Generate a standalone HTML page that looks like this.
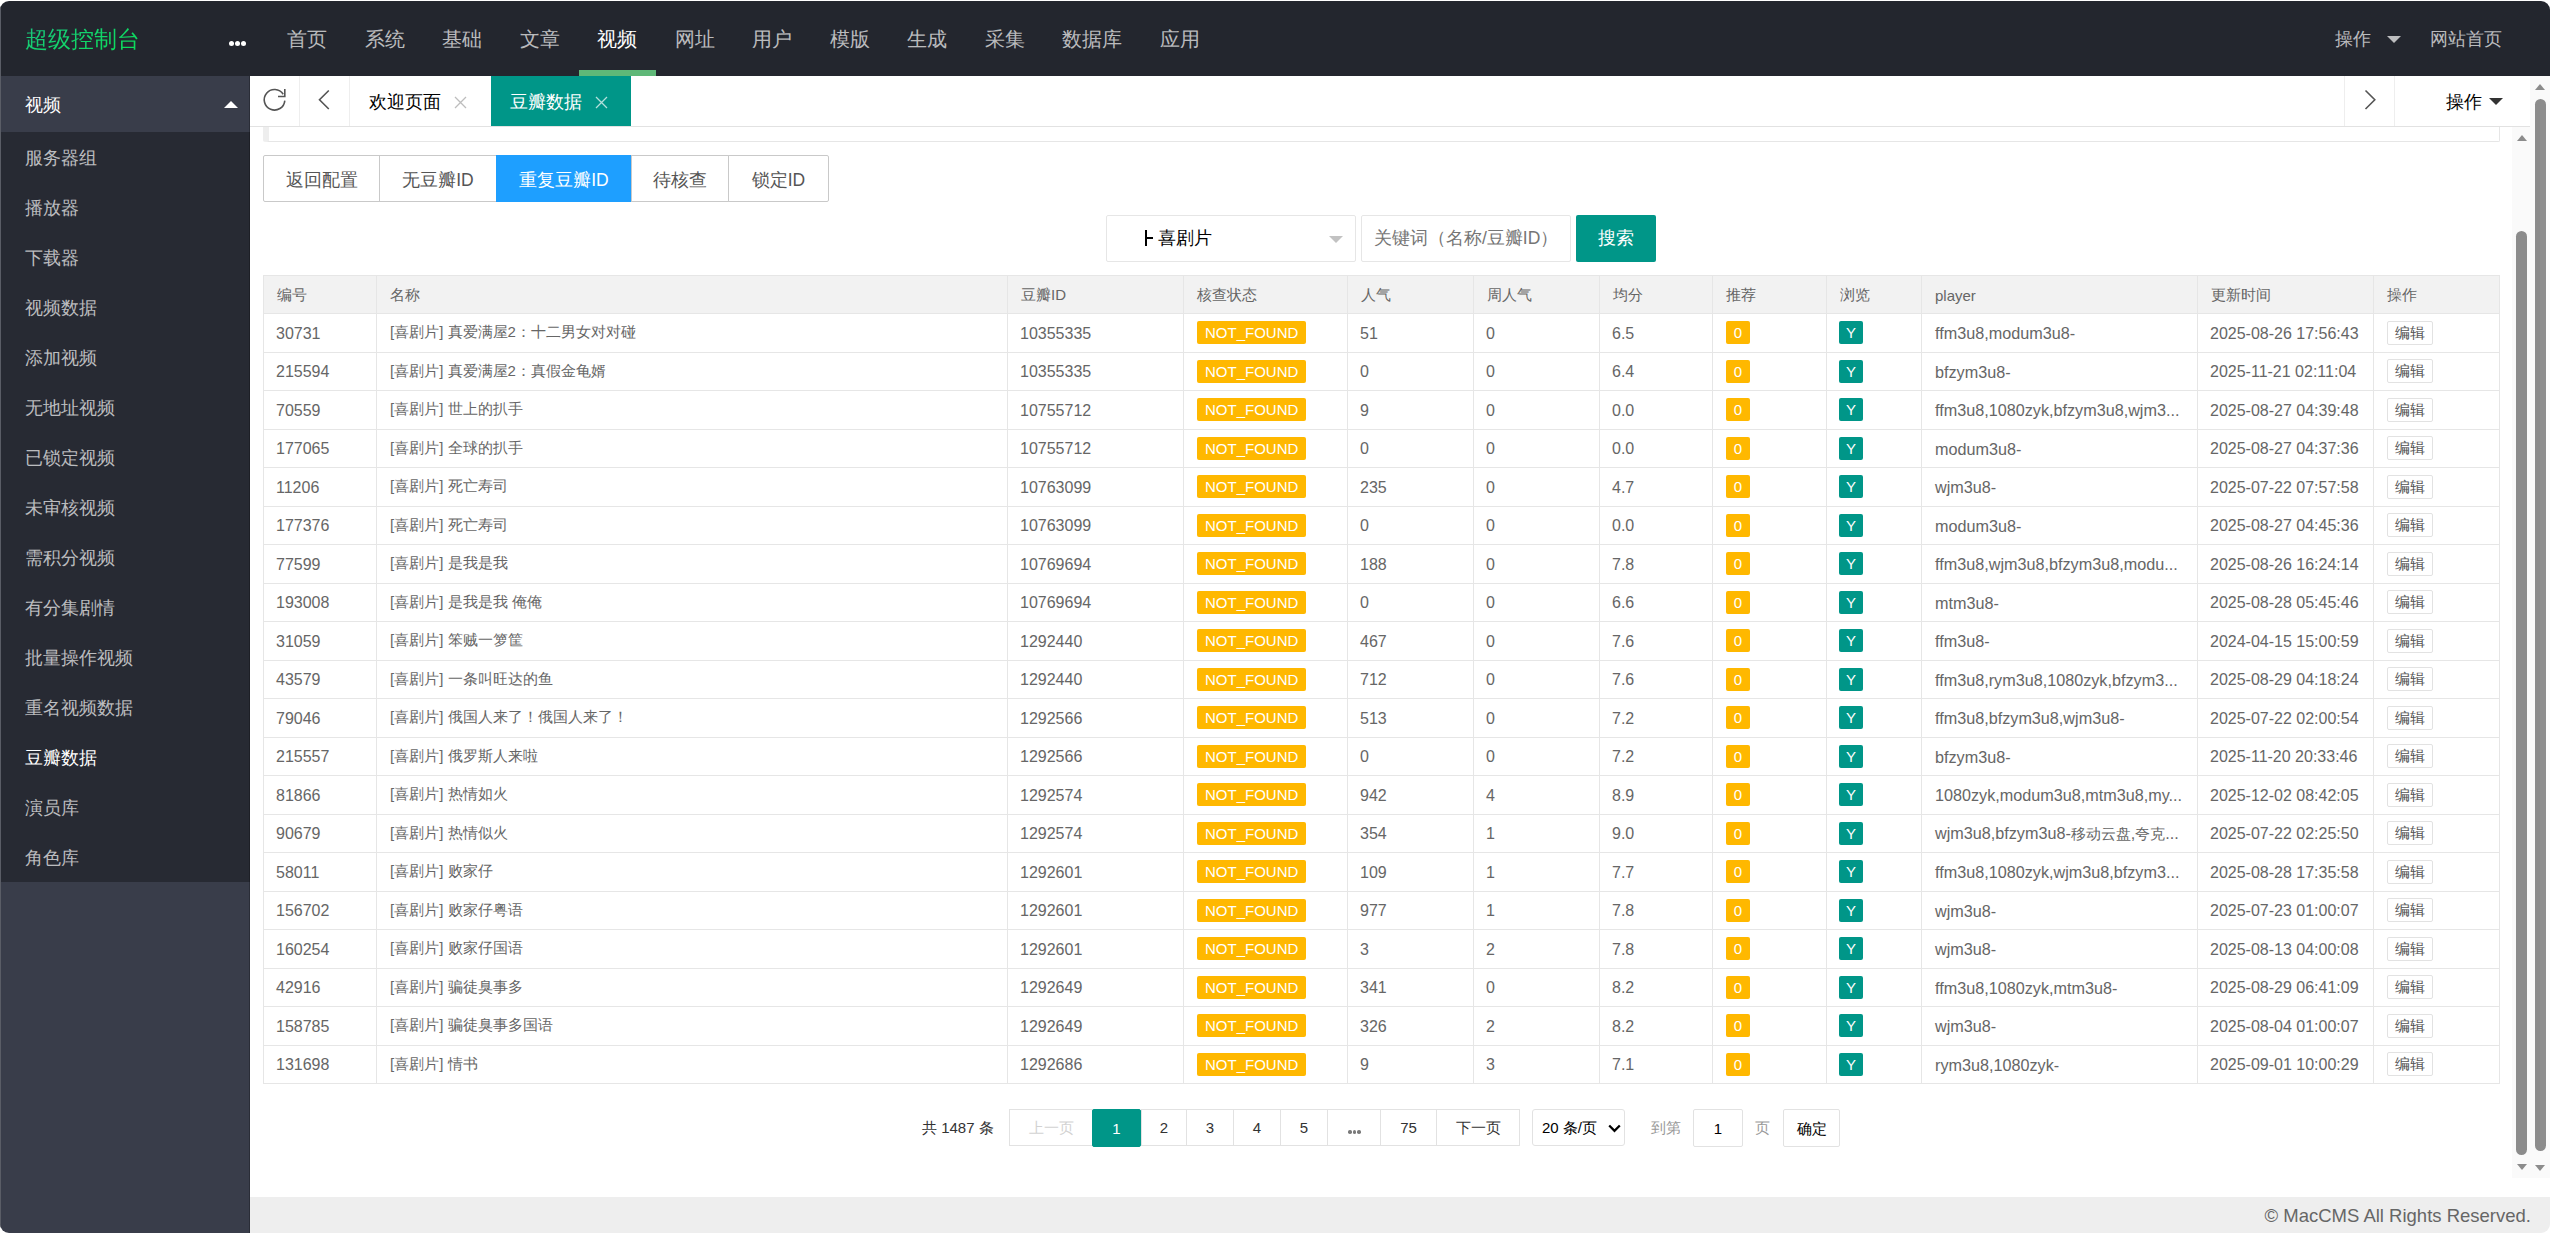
<!DOCTYPE html><html><head><meta charset="utf-8"><style>
*{margin:0;padding:0;box-sizing:border-box}
html,body{width:2550px;height:1233px;overflow:hidden;background:#fff;font-family:"Liberation Sans",sans-serif;}
.abs{position:absolute}
#win{position:absolute;left:0;top:1px;width:2550px;height:1232px;border-radius:9px;overflow:hidden;background:#fff}
#pg{position:absolute;left:0;top:-1px;width:2550px;height:1233px}
#hdr{position:absolute;left:0;top:1px;width:2550px;height:75px;background:#23262e}
#logo{position:absolute;left:25px;top:0;height:75px;line-height:77px;font-size:22.5px;white-space:nowrap;background:linear-gradient(160deg,#22b98e 0%,#12d46a 50%,#05e448 100%);-webkit-background-clip:text;background-clip:text;color:transparent}
.dots{position:absolute;left:229px;top:40px;}
.dots i{position:absolute;top:0;width:5px;height:5px;border-radius:50%;background:#fff}
.nav{position:absolute;top:0;height:75px;line-height:77px;font-size:20px;color:rgba(255,255,255,.7);white-space:nowrap}
.nav.on{color:#fff}
#uline{position:absolute;left:579px;top:69px;width:77px;height:6px;background:#5fb878}
#side{position:absolute;left:0;top:76px;width:250px;height:1157px;background:#393d4a}
#sedge{position:absolute;left:249px;top:76px;width:1px;height:1157px;background:rgba(0,0,0,.25)}
#side .par{position:absolute;left:0;top:0;width:250px;height:56px;background:#393d4a;color:#fff;font-size:17.5px;line-height:58px;padding-left:25px}
#side .kids{position:absolute;left:0;top:56px;width:250px;height:750px;background:#272a33}
#side .kid{position:absolute;left:25px;height:50px;line-height:52px;font-size:17.5px;color:rgba(255,255,255,.7);white-space:nowrap}
#side .kid.on{color:#fff}
#lborder{position:absolute;left:0;top:1px;width:1px;height:1232px;background:#5a5d66}
#tabs{position:absolute;left:250px;top:76px;width:2280px;height:51px;background:#fff;border-bottom:1px solid #e2e2e2}
.tcell{position:absolute;top:0;height:50px;border-right:1px solid #eee}
.ttl{position:absolute;top:0;height:50px;line-height:52px;font-size:17.5px;color:#000;white-space:nowrap}
#content{position:absolute;left:250px;top:127px;width:2262px;height:1070px;background:#fff;overflow:hidden}
#footer{position:absolute;left:250px;top:1197px;width:2300px;height:36px;background:#eee}
#footer span{position:absolute;right:19px;top:0px;line-height:37px;font-size:18.5px;color:#666;white-space:nowrap}
.btng{position:absolute;top:155px;height:47px;border:1px solid #c9c9c9;border-radius:2px;}
.btn{position:absolute;top:155px;height:47px;line-height:49px;font-size:17.5px;color:#555;border:1px solid #c9c9c9;background:#fff;text-align:center;white-space:nowrap}
table{border-collapse:collapse;table-layout:fixed;position:absolute;left:263px;top:275px}
td,th{border:1px solid #e6e6e6;font-size:15px;color:#666;text-align:left;font-weight:normal;padding:0 0 0 13px;white-space:nowrap;overflow:hidden}
th{background:#f2f2f2;height:38px;padding-top:2px}
td{height:38.5px}
td.n{font-size:16px;padding-left:12px;padding-top:2px}
td.p{font-size:16.2px;padding-top:2px}
td.p i{font-style:normal;font-size:15px}
.bd{display:inline-block;height:23px;line-height:23px;padding:0 8px;margin-left:0;color:#fff;font-size:15px;border-radius:2px;vertical-align:middle}
.org{background:#ffb800}
.sq{width:24px;padding:0;text-align:center}
.grn{background:#009688}
.edit{display:inline-block;height:24px;line-height:22px;width:46px;text-align:center;padding:0;border:1px solid #e2e2e2;border-radius:2px;color:#555;font-size:15px;background:#fff}
.pg{position:absolute;top:1109px;height:37px;line-height:36px;border:1px solid #e2e2e2;font-size:15px;color:#333;text-align:center;background:#fff;white-space:nowrap}
.dt{position:absolute;top:20px;width:3.5px;height:3.5px;border-radius:50%;background:#7a7a7a;margin-left:-1px}
.sb-thumb{position:absolute;background:#8c8c8c;border-radius:6px}
.tri-up{position:absolute;width:0;height:0;border-left:5px solid transparent;border-right:5px solid transparent;border-bottom:6px solid #8c8c8c}
.tri-dn{position:absolute;width:0;height:0;border-left:5px solid transparent;border-right:5px solid transparent;border-top:6px solid #8c8c8c}
</style></head><body><div id="win"><div id="pg">
<div id="hdr"><div id="logo">超级控制台</div>
<div class="dots"><i style="left:0"></i><i style="left:6px"></i><i style="left:12px"></i></div>
<div class="nav" style="left:287px">首页</div>
<div class="nav" style="left:365px">系统</div>
<div class="nav" style="left:442px">基础</div>
<div class="nav" style="left:520px">文章</div>
<div class="nav on" style="left:597px">视频</div>
<div class="nav" style="left:675px">网址</div>
<div class="nav" style="left:752px">用户</div>
<div class="nav" style="left:830px">模版</div>
<div class="nav" style="left:907px">生成</div>
<div class="nav" style="left:985px">采集</div>
<div class="nav" style="left:1062px">数据库</div>
<div class="nav" style="left:1160px">应用</div>
<div id="uline"></div>
<div class="nav" style="left:2335px;font-size:17.5px">操作</div><div class="abs" style="left:2387px;top:35px;width:0;height:0;border-left:7px solid transparent;border-right:7px solid transparent;border-top:7px solid rgba(255,255,255,.7)"></div>
<div class="nav" style="left:2430px;font-size:17.5px">网站首页</div>
</div>
<div id="side"><div class="par">视频</div><div class="abs" style="left:224px;top:25px;width:0;height:0;border-left:7px solid transparent;border-right:7px solid transparent;border-bottom:7px solid #fff"></div><div class="kids">
<div class="kid" style="top:0px">服务器组</div>
<div class="kid" style="top:50px">播放器</div>
<div class="kid" style="top:100px">下载器</div>
<div class="kid" style="top:150px">视频数据</div>
<div class="kid" style="top:200px">添加视频</div>
<div class="kid" style="top:250px">无地址视频</div>
<div class="kid" style="top:300px">已锁定视频</div>
<div class="kid" style="top:350px">未审核视频</div>
<div class="kid" style="top:400px">需积分视频</div>
<div class="kid" style="top:450px">有分集剧情</div>
<div class="kid" style="top:500px">批量操作视频</div>
<div class="kid" style="top:550px">重名视频数据</div>
<div class="kid on" style="top:600px">豆瓣数据</div>
<div class="kid" style="top:650px">演员库</div>
<div class="kid" style="top:700px">角色库</div>
</div></div>
<div id="tabs">
<div class="tcell" style="left:0;width:50px"><svg class="abs" style="left:12px;top:12px" width="26" height="26" viewBox="0 0 26 26"><path d="M21.2 6.2 A10.3 10.3 0 1 0 22.8 12.6" fill="none" stroke="#555" stroke-width="1.6"/><path d="M22.8 1 L22.8 8.5 L16 8.5" fill="none" stroke="#555" stroke-width="1.6"/></svg></div>
<div class="tcell" style="left:50px;width:50px"><svg class="abs" style="left:17px;top:13px" width="16" height="24" viewBox="0 0 16 24"><path d="M11.8 1.5 L2.5 10.8 L11.8 20" fill="none" stroke="#555" stroke-width="1.6"/></svg></div>
<div class="ttl" style="left:119px">欢迎页面</div><svg class="abs" style="left:204px;top:20px" width="13" height="13" viewBox="0 0 13 13"><path d="M1 1L12 12M12 1L1 12" stroke="#bdbdbd" stroke-width="1.3"/></svg>
<div class="abs" style="left:241px;top:0;width:140px;height:50px;background:#009688"></div><div class="ttl" style="left:260px;color:#fff">豆瓣数据</div><svg class="abs" style="left:345px;top:20px" width="13" height="13" viewBox="0 0 13 13"><path d="M1 1L12 12M12 1L1 12" stroke="rgba(255,255,255,.7)" stroke-width="1.3"/></svg>
<div class="tcell" style="left:2094px;width:51px;border-left:1px solid #eee;border-right:1px solid #eee"><svg class="abs" style="left:18px;top:13px" width="16" height="24" viewBox="0 0 16 24"><path d="M2.5 1.5 L11.8 10.8 L2.5 20" fill="none" stroke="#555" stroke-width="1.6"/></svg></div>
<div class="ttl" style="left:2196px">操作</div><div class="abs" style="left:2239px;top:22px;width:0;height:0;border-left:7px solid transparent;border-right:7px solid transparent;border-top:7px solid #333"></div>
</div>
<div class="abs" style="left:263px;top:127px;width:2237px;height:15px;border-left:6px solid #eee;border-right:1px solid #e6e6e6;border-bottom:1px solid #e6e6e6;border-radius:0 0 2px 2px"></div>
<div class="btn" style="left:263px;width:117px;border-radius:2px 0 0 2px;">返回配置</div>
<div class="btn" style="left:379px;width:118px;">无豆瓣ID</div>
<div class="btn" style="left:496px;width:136px;background:#1e9fff;color:#fff;border-color:#1e9fff;">重复豆瓣ID</div>
<div class="btn" style="left:631px;width:98px;">待核查</div>
<div class="btn" style="left:728px;width:101px;border-radius:0 2px 2px 0;">锁定ID</div>
<div class="abs" style="left:1106px;top:215px;width:250px;height:47px;border:1px solid #e6e6e6;border-radius:2px"></div>
<div class="abs" style="left:1145px;top:230px;width:2px;height:16px;background:#000"></div><div class="abs" style="left:1147px;top:237px;width:6px;height:2px;background:#000"></div>
<div class="abs" style="left:1158px;top:215px;line-height:47px;font-size:17.5px;color:#000;white-space:nowrap">喜剧片</div>
<div class="abs" style="left:1329px;top:236px;width:0;height:0;border-left:7px solid transparent;border-right:7px solid transparent;border-top:7px solid #c2c2c2"></div>
<div class="abs" style="left:1361px;top:215px;width:210px;height:47px;border:1px solid #e6e6e6;border-radius:2px"></div>
<div class="abs" style="left:1374px;top:215px;line-height:47px;font-size:17.5px;color:#757575;white-space:nowrap">关键词（名称/豆瓣ID）</div>
<div class="abs" style="left:1576px;top:215px;width:80px;height:47px;background:#009688;border-radius:2px;color:#fff;font-size:17.5px;line-height:47px;text-align:center">搜索</div>
<table><colgroup>
<col style="width:113px">
<col style="width:631px">
<col style="width:176px">
<col style="width:164px">
<col style="width:126px">
<col style="width:126px">
<col style="width:113px">
<col style="width:114px">
<col style="width:95px">
<col style="width:276px">
<col style="width:176px">
<col style="width:126px">
</colgroup><tr>
<th>编号</th>
<th>名称</th>
<th>豆瓣ID</th>
<th>核查状态</th>
<th>人气</th>
<th>周人气</th>
<th>均分</th>
<th>推荐</th>
<th>浏览</th>
<th>player</th>
<th>更新时间</th>
<th>操作</th>
</tr>
<tr>
<td class="n">30731</td><td>[喜剧片] 真爱满屋2：十二男女对对碰</td><td class="n">10355335</td><td><span class="bd org">NOT_FOUND</span></td><td class="n">51</td><td class="n">0</td><td class="n">6.5</td><td><span class="bd org sq">0</span></td><td><span class="bd grn sq" style="margin-left:-1px">Y</span></td><td class="p">ffm3u8,modum3u8-</td><td class="n">2025-08-26 17:56:43</td><td><span class="edit">编辑</span></td>
</tr>
<tr>
<td class="n">215594</td><td>[喜剧片] 真爱满屋2：真假金龟婿</td><td class="n">10355335</td><td><span class="bd org">NOT_FOUND</span></td><td class="n">0</td><td class="n">0</td><td class="n">6.4</td><td><span class="bd org sq">0</span></td><td><span class="bd grn sq" style="margin-left:-1px">Y</span></td><td class="p">bfzym3u8-</td><td class="n">2025-11-21 02:11:04</td><td><span class="edit">编辑</span></td>
</tr>
<tr>
<td class="n">70559</td><td>[喜剧片] 世上的扒手</td><td class="n">10755712</td><td><span class="bd org">NOT_FOUND</span></td><td class="n">9</td><td class="n">0</td><td class="n">0.0</td><td><span class="bd org sq">0</span></td><td><span class="bd grn sq" style="margin-left:-1px">Y</span></td><td class="p">ffm3u8,1080zyk,bfzym3u8,wjm3...</td><td class="n">2025-08-27 04:39:48</td><td><span class="edit">编辑</span></td>
</tr>
<tr>
<td class="n">177065</td><td>[喜剧片] 全球的扒手</td><td class="n">10755712</td><td><span class="bd org">NOT_FOUND</span></td><td class="n">0</td><td class="n">0</td><td class="n">0.0</td><td><span class="bd org sq">0</span></td><td><span class="bd grn sq" style="margin-left:-1px">Y</span></td><td class="p">modum3u8-</td><td class="n">2025-08-27 04:37:36</td><td><span class="edit">编辑</span></td>
</tr>
<tr>
<td class="n">11206</td><td>[喜剧片] 死亡寿司</td><td class="n">10763099</td><td><span class="bd org">NOT_FOUND</span></td><td class="n">235</td><td class="n">0</td><td class="n">4.7</td><td><span class="bd org sq">0</span></td><td><span class="bd grn sq" style="margin-left:-1px">Y</span></td><td class="p">wjm3u8-</td><td class="n">2025-07-22 07:57:58</td><td><span class="edit">编辑</span></td>
</tr>
<tr>
<td class="n">177376</td><td>[喜剧片] 死亡寿司</td><td class="n">10763099</td><td><span class="bd org">NOT_FOUND</span></td><td class="n">0</td><td class="n">0</td><td class="n">0.0</td><td><span class="bd org sq">0</span></td><td><span class="bd grn sq" style="margin-left:-1px">Y</span></td><td class="p">modum3u8-</td><td class="n">2025-08-27 04:45:36</td><td><span class="edit">编辑</span></td>
</tr>
<tr>
<td class="n">77599</td><td>[喜剧片] 是我是我</td><td class="n">10769694</td><td><span class="bd org">NOT_FOUND</span></td><td class="n">188</td><td class="n">0</td><td class="n">7.8</td><td><span class="bd org sq">0</span></td><td><span class="bd grn sq" style="margin-left:-1px">Y</span></td><td class="p">ffm3u8,wjm3u8,bfzym3u8,modu...</td><td class="n">2025-08-26 16:24:14</td><td><span class="edit">编辑</span></td>
</tr>
<tr>
<td class="n">193008</td><td>[喜剧片] 是我是我 俺俺</td><td class="n">10769694</td><td><span class="bd org">NOT_FOUND</span></td><td class="n">0</td><td class="n">0</td><td class="n">6.6</td><td><span class="bd org sq">0</span></td><td><span class="bd grn sq" style="margin-left:-1px">Y</span></td><td class="p">mtm3u8-</td><td class="n">2025-08-28 05:45:46</td><td><span class="edit">编辑</span></td>
</tr>
<tr>
<td class="n">31059</td><td>[喜剧片] 笨贼一箩筐</td><td class="n">1292440</td><td><span class="bd org">NOT_FOUND</span></td><td class="n">467</td><td class="n">0</td><td class="n">7.6</td><td><span class="bd org sq">0</span></td><td><span class="bd grn sq" style="margin-left:-1px">Y</span></td><td class="p">ffm3u8-</td><td class="n">2024-04-15 15:00:59</td><td><span class="edit">编辑</span></td>
</tr>
<tr>
<td class="n">43579</td><td>[喜剧片] 一条叫旺达的鱼</td><td class="n">1292440</td><td><span class="bd org">NOT_FOUND</span></td><td class="n">712</td><td class="n">0</td><td class="n">7.6</td><td><span class="bd org sq">0</span></td><td><span class="bd grn sq" style="margin-left:-1px">Y</span></td><td class="p">ffm3u8,rym3u8,1080zyk,bfzym3...</td><td class="n">2025-08-29 04:18:24</td><td><span class="edit">编辑</span></td>
</tr>
<tr>
<td class="n">79046</td><td>[喜剧片] 俄国人来了！俄国人来了！</td><td class="n">1292566</td><td><span class="bd org">NOT_FOUND</span></td><td class="n">513</td><td class="n">0</td><td class="n">7.2</td><td><span class="bd org sq">0</span></td><td><span class="bd grn sq" style="margin-left:-1px">Y</span></td><td class="p">ffm3u8,bfzym3u8,wjm3u8-</td><td class="n">2025-07-22 02:00:54</td><td><span class="edit">编辑</span></td>
</tr>
<tr>
<td class="n">215557</td><td>[喜剧片] 俄罗斯人来啦</td><td class="n">1292566</td><td><span class="bd org">NOT_FOUND</span></td><td class="n">0</td><td class="n">0</td><td class="n">7.2</td><td><span class="bd org sq">0</span></td><td><span class="bd grn sq" style="margin-left:-1px">Y</span></td><td class="p">bfzym3u8-</td><td class="n">2025-11-20 20:33:46</td><td><span class="edit">编辑</span></td>
</tr>
<tr>
<td class="n">81866</td><td>[喜剧片] 热情如火</td><td class="n">1292574</td><td><span class="bd org">NOT_FOUND</span></td><td class="n">942</td><td class="n">4</td><td class="n">8.9</td><td><span class="bd org sq">0</span></td><td><span class="bd grn sq" style="margin-left:-1px">Y</span></td><td class="p">1080zyk,modum3u8,mtm3u8,my...</td><td class="n">2025-12-02 08:42:05</td><td><span class="edit">编辑</span></td>
</tr>
<tr>
<td class="n">90679</td><td>[喜剧片] 热情似火</td><td class="n">1292574</td><td><span class="bd org">NOT_FOUND</span></td><td class="n">354</td><td class="n">1</td><td class="n">9.0</td><td><span class="bd org sq">0</span></td><td><span class="bd grn sq" style="margin-left:-1px">Y</span></td><td class="p">wjm3u8,bfzym3u8-<i>移动云盘</i>,<i>夸克</i>...</td><td class="n">2025-07-22 02:25:50</td><td><span class="edit">编辑</span></td>
</tr>
<tr>
<td class="n">58011</td><td>[喜剧片] 败家仔</td><td class="n">1292601</td><td><span class="bd org">NOT_FOUND</span></td><td class="n">109</td><td class="n">1</td><td class="n">7.7</td><td><span class="bd org sq">0</span></td><td><span class="bd grn sq" style="margin-left:-1px">Y</span></td><td class="p">ffm3u8,1080zyk,wjm3u8,bfzym3...</td><td class="n">2025-08-28 17:35:58</td><td><span class="edit">编辑</span></td>
</tr>
<tr>
<td class="n">156702</td><td>[喜剧片] 败家仔粤语</td><td class="n">1292601</td><td><span class="bd org">NOT_FOUND</span></td><td class="n">977</td><td class="n">1</td><td class="n">7.8</td><td><span class="bd org sq">0</span></td><td><span class="bd grn sq" style="margin-left:-1px">Y</span></td><td class="p">wjm3u8-</td><td class="n">2025-07-23 01:00:07</td><td><span class="edit">编辑</span></td>
</tr>
<tr>
<td class="n">160254</td><td>[喜剧片] 败家仔国语</td><td class="n">1292601</td><td><span class="bd org">NOT_FOUND</span></td><td class="n">3</td><td class="n">2</td><td class="n">7.8</td><td><span class="bd org sq">0</span></td><td><span class="bd grn sq" style="margin-left:-1px">Y</span></td><td class="p">wjm3u8-</td><td class="n">2025-08-13 04:00:08</td><td><span class="edit">编辑</span></td>
</tr>
<tr>
<td class="n">42916</td><td>[喜剧片] 骗徒臭事多</td><td class="n">1292649</td><td><span class="bd org">NOT_FOUND</span></td><td class="n">341</td><td class="n">0</td><td class="n">8.2</td><td><span class="bd org sq">0</span></td><td><span class="bd grn sq" style="margin-left:-1px">Y</span></td><td class="p">ffm3u8,1080zyk,mtm3u8-</td><td class="n">2025-08-29 06:41:09</td><td><span class="edit">编辑</span></td>
</tr>
<tr>
<td class="n">158785</td><td>[喜剧片] 骗徒臭事多国语</td><td class="n">1292649</td><td><span class="bd org">NOT_FOUND</span></td><td class="n">326</td><td class="n">2</td><td class="n">8.2</td><td><span class="bd org sq">0</span></td><td><span class="bd grn sq" style="margin-left:-1px">Y</span></td><td class="p">wjm3u8-</td><td class="n">2025-08-04 01:00:07</td><td><span class="edit">编辑</span></td>
</tr>
<tr>
<td class="n">131698</td><td>[喜剧片] 情书</td><td class="n">1292686</td><td><span class="bd org">NOT_FOUND</span></td><td class="n">9</td><td class="n">3</td><td class="n">7.1</td><td><span class="bd org sq">0</span></td><td><span class="bd grn sq" style="margin-left:-1px">Y</span></td><td class="p">rym3u8,1080zyk-</td><td class="n">2025-09-01 10:00:29</td><td><span class="edit">编辑</span></td>
</tr>
</table>
<div class="abs" style="left:922px;top:1109px;line-height:38px;font-size:15px;color:#333;white-space:nowrap">共 1487 条</div>
<div class="pg" style="left:1009px;width:84px;color:#d2d2d2">上一页</div>
<div class="pg" style="left:1092px;width:49px;background:#009688;border-color:#009688;color:#fff;border-radius:2px;height:38px;line-height:37px">1</div>
<div class="pg" style="left:1141px;width:46px;color:#333">2</div>
<div class="pg" style="left:1186px;width:48px;color:#333">3</div>
<div class="pg" style="left:1233px;width:48px;color:#333">4</div>
<div class="pg" style="left:1280px;width:48px;color:#333">5</div>
<div class="pg" style="left:1327px;width:54px;color:#333"><b class='dt' style='left:21px'></b><b class='dt' style='left:25.5px'></b><b class='dt' style='left:30px'></b></div>
<div class="pg" style="left:1380px;width:57px;color:#333">75</div>
<div class="pg" style="left:1436px;width:84px;color:#333">下一页</div>
<div class="pg" style="left:1532px;width:93px;text-align:left;padding-left:9px;color:#000;border-color:#e2e2e2;border-radius:3px">20 条/页<svg class="abs" style="left:75px;top:14px" width="13" height="9" viewBox="0 0 13 9"><path d="M1.2 1.5L6.5 6.8L11.8 1.5" fill="none" stroke="#000" stroke-width="2.3"/></svg></div>
<div class="abs" style="left:1651px;top:1109px;line-height:38px;font-size:15px;color:#999">到第</div>
<div class="pg" style="left:1693px;width:50px;height:38px;line-height:37px;color:#000;border-radius:2px">1</div>
<div class="abs" style="left:1755px;top:1109px;line-height:38px;font-size:15px;color:#999">页</div>
<div class="pg" style="left:1783px;width:57px;height:38px;line-height:37px;color:#000;border-radius:2px;font-size:15px">确定</div>
<div id="footer"><span>© MacCMS All Rights Reserved.</span></div>
<div class="abs" style="left:2512px;top:127px;width:18px;height:1051px;background:#fafafa"></div>
<div class="tri-up" style="left:2517px;top:135px"></div><div class="sb-thumb" style="left:2516px;top:231px;width:11px;height:924px"></div><div class="tri-dn" style="left:2517px;top:1164px"></div>
<div class="abs" style="left:2530px;top:76px;width:20px;height:1102px;background:#fafafa"></div>
<div class="tri-up" style="left:2535px;top:84px"></div><div class="sb-thumb" style="left:2535px;top:99px;width:11px;height:1052px"></div><div class="tri-dn" style="left:2535px;top:1165px"></div>
<div id="sedge"></div><div id="lborder"></div></div></div></body></html>
